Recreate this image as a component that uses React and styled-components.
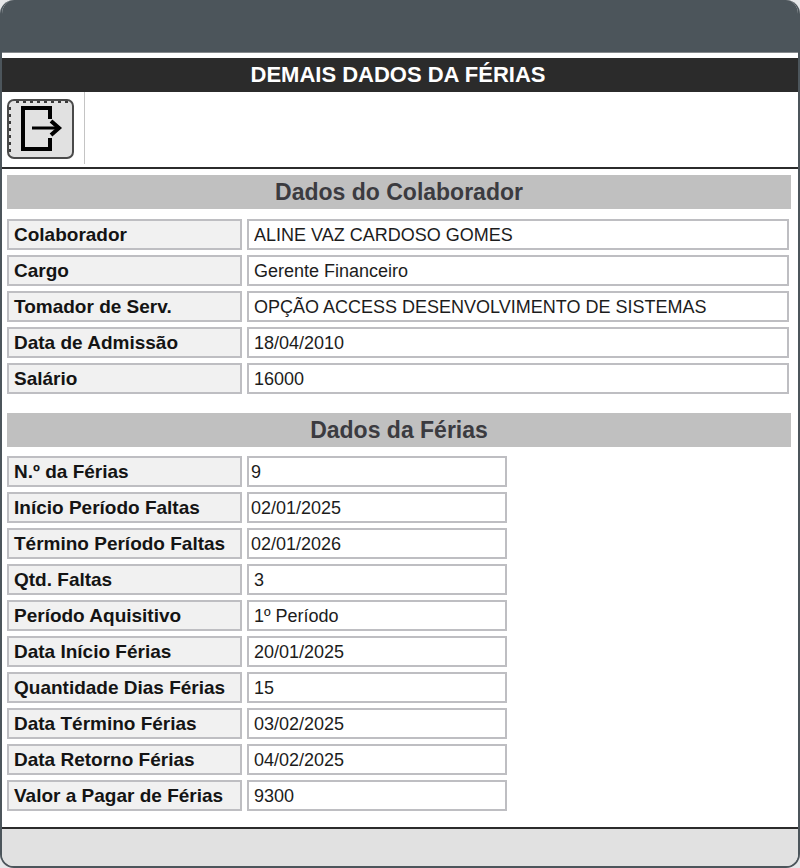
import React from 'react';
import styled, { createGlobalStyle } from 'styled-components';

const frameColor = '#4c555b';
const lineColor = '#bebec2';

const GlobalStyle = createGlobalStyle`
  * {
    box-sizing: border-box;
  }

  body {
    margin: 0;
    background: #e6e7e9;
    font-family: "Liberation Sans", Arial, sans-serif;
  }
`;

const Window = styled.div`
  display: flex;
  flex-direction: column;
  min-height: 100vh;
  border: 2px solid ${frameColor};
  border-top: 0;
  border-radius: 14px;
  background: #fff;
  overflow: hidden;
`;

const TitleBar = styled.header`
  height: 53px;
  background: ${frameColor};
  border-bottom: 1px solid #85898c;
`;

const Heading = styled.h1`
  margin: 5px 0 0;
  padding-right: 4px;
  background: #2b2b2b;
  color: #fff;
  font-size: 22px;
  font-weight: bold;
  line-height: 34px;
  text-align: center;
`;

const Toolbar = styled.div`
  display: flex;
  align-items: flex-start;
  height: 77px;
  padding-left: 5px;
  border-bottom: 2px solid #2b2b2b;
`;

const ExitButton = styled.button`
  display: flex;
  align-items: center;
  justify-content: center;
  width: 67px;
  height: 60px;
  margin-top: 7px;
  padding: 0;
  border: 2px solid #4a4a4a;
  border-radius: 7px;
  background: #e1e1e1;
`;

const Separator = styled.div`
  width: 1px;
  height: 72px;
  margin-left: 10px;
  background: #c4c4c4;
`;

const Form = styled.form`
  display: flex;
  flex-direction: column;
  gap: 19px;
  padding: 6px 7px 16px 5px;
`;

const Section = styled.section`
  display: flex;
  flex-direction: column;
  gap: ${props => (props.$compact ? 9 : 10)}px;
`;

const SectionTitle = styled.h2`
  margin: 0;
  background: #c0c0c0;
  color: #3b3b40;
  font-size: 23px;
  font-weight: bold;
  line-height: 34px;
  text-align: center;
`;

const Rows = styled.div`
  display: flex;
  flex-direction: column;
  gap: 5px;
  padding-right: 2px;
`;

const Row = styled.div`
  display: flex;
  gap: 5px;
`;

const Label = styled.label`
  flex: none;
  width: 235px;
  height: 31px;
  padding-left: 5px;
  border: 2px solid ${lineColor};
  background: #f1f1f1;
  color: #141414;
  font-size: 19px;
  font-weight: bold;
  line-height: 28px;
  white-space: nowrap;
`;

const Field = styled.input`
  flex: ${props => (props.$short ? '0 1 260px' : '1')};
  min-width: 0;
  height: 31px;
  padding: 1px 0 0 ${props => (props.$tight ? 2 : 5)}px;
  border: 2px solid ${lineColor};
  background: #fff;
  color: #1c1c1c;
  font-family: inherit;
  font-size: 18px;
  outline: none;
`;

const Footer = styled.footer`
  flex: 1;
  min-height: 36px;
  border-top: 2px solid #2b2b2b;
  background: #e1e1e1;
`;

const ExitIcon = () => (
  <svg width="63" height="56" viewBox="0 0 63 56" fill="none" stroke="#000" aria-hidden="true">
    <path d="M7 1H60" stroke="#3a3a3a" strokeWidth="2" strokeDasharray="3 4" />
    <path d="M1 6V53" stroke="#3a3a3a" strokeWidth="2" strokeDasharray="3 4" />
    <path d="M41 18V7H14V48H41V37" strokeWidth="4" />
    <path d="M23 27H50" strokeWidth="3" />
    <path d="M42 20L50 27L42 34" strokeWidth="4" />
  </svg>
);

const employee = [
  { id: 'colaborador', label: 'Colaborador', value: 'ALINE VAZ CARDOSO GOMES' },
  { id: 'cargo', label: 'Cargo', value: 'Gerente Financeiro' },
  { id: 'tomador', label: 'Tomador de Serv.', value: 'OPÇÃO ACCESS DESENVOLVIMENTO DE SISTEMAS' },
  { id: 'admissao', label: 'Data de Admissão', value: '18/04/2010' },
  { id: 'salario', label: 'Salário', value: '16000' },
];

const vacation = [
  { id: 'numero', label: 'N.º da Férias', value: '9', tight: true },
  { id: 'inicioFaltas', label: 'Início Período Faltas', value: '02/01/2025', tight: true },
  { id: 'terminoFaltas', label: 'Término Período Faltas', value: '02/01/2026', tight: true },
  { id: 'faltas', label: 'Qtd. Faltas', value: '3' },
  { id: 'periodo', label: 'Período Aquisitivo', value: '1º Período' },
  { id: 'inicioFerias', label: 'Data Início Férias', value: '20/01/2025' },
  { id: 'dias', label: 'Quantidade Dias Férias', value: '15' },
  { id: 'terminoFerias', label: 'Data Término Férias', value: '03/02/2025' },
  { id: 'retorno', label: 'Data Retorno Férias', value: '04/02/2025' },
  { id: 'valor', label: 'Valor a Pagar de Férias', value: '9300' },
];

const FieldRows = ({ items, short }) => (
  <Rows>
    {items.map(item => (
      <Row key={item.id}>
        <Label htmlFor={item.id}>{item.label}</Label>
        <Field id={item.id} type="text" defaultValue={item.value} $short={short} $tight={item.tight} />
      </Row>
    ))}
  </Rows>
);

export default function App() {
  return (
    <>
      <GlobalStyle />
      <Window>
        <TitleBar />
        <Heading>DEMAIS DADOS DA FÉRIAS</Heading>
        <Toolbar>
          <ExitButton type="button" aria-label="Sair">
            <ExitIcon />
          </ExitButton>
          <Separator />
        </Toolbar>
        <Form>
          <Section>
            <SectionTitle>Dados do Colaborador</SectionTitle>
            <FieldRows items={employee} />
          </Section>
          <Section $compact>
            <SectionTitle>Dados da Férias</SectionTitle>
            <FieldRows items={vacation} short />
          </Section>
        </Form>
        <Footer />
      </Window>
    </>
  );
}
